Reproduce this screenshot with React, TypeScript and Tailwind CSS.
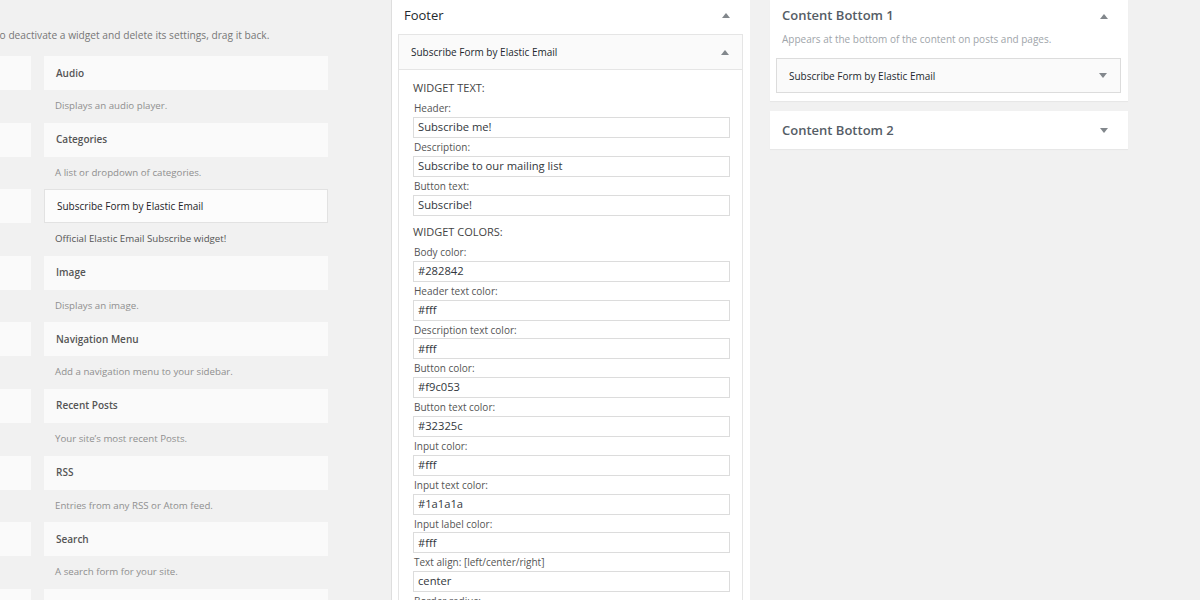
import React from "react";

type Widget = { title: string; desc: string; active?: boolean };

// first column is scrolled off to the left, only the card edges show
const leftColumnRows = 9;

const rightColumn: Widget[] = [
  { title: "Audio", desc: "Displays an audio player." },
  { title: "Categories", desc: "A list or dropdown of categories." },
  {
    title: "Subscribe Form by Elastic Email",
    desc: "Official Elastic Email Subscribe widget!",
    active: true,
  },
  { title: "Image", desc: "Displays an image." },
  { title: "Navigation Menu", desc: "Add a navigation menu to your sidebar." },
  { title: "Recent Posts", desc: "Your site\u2019s most recent Posts." },
  { title: "RSS", desc: "Entries from any RSS or Atom feed." },
  { title: "Search", desc: "A search form for your site." },
  { title: "Video", desc: "Displays a video from the media library." },
];

const textFields = [
  { label: "Header:", value: "Subscribe me!" },
  { label: "Description:", value: "Subscribe to our mailing list" },
  { label: "Button text:", value: "Subscribe!" },
];

const colorFields = [
  { label: "Body color:", value: "#282842" },
  { label: "Header text color:", value: "#fff" },
  { label: "Description text color:", value: "#fff" },
  { label: "Button color:", value: "#f9c053" },
  { label: "Button text color:", value: "#32325c" },
  { label: "Input color:", value: "#fff" },
  { label: "Input text color:", value: "#1a1a1a" },
  { label: "Input label color:", value: "#fff" },
  { label: "Text align: [left/center/right]", value: "center" },
  { label: "Border radius:", value: "4px" },
];

const Arrow: React.FC<{ up?: boolean }> = ({ up }) => (
  <svg width="8" height="5" viewBox="0 0 8 5" className="shrink-0">
    <polygon points={up ? "0,5 8,5 4,0" : "0,0 8,0 4,5"} fill="#82878c" />
  </svg>
);

const WidgetCard: React.FC<{ widget: Widget }> = ({ widget }) => (
  <div>
    <div
      className={
        widget.active
          ? "h-[34px] flex items-center px-[12px] bg-[#fcfcfc] border border-[#e2e2e2] text-[10px] text-[#1d2327]"
          : "h-[34px] flex items-center px-[12px] bg-[#fafafa] text-[10px] font-semibold text-[#555]"
      }
    >
      {widget.title}
    </div>
    <div
      className={
        widget.active
          ? "h-[32.6px] flex items-center pl-[11px] text-[9.7px] text-[#555] whitespace-nowrap"
          : "h-[32.6px] flex items-center pl-[11px] text-[9.7px] text-[#8f8f8f] whitespace-nowrap"
      }
    >
      {widget.desc}
    </div>
  </div>
);

const Field: React.FC<{ label: string; value: string }> = ({ label, value }) => (
  <div>
    <div className="h-[17.8px] pt-[2px] leading-[15.8px] pl-px text-[10px] text-[#555]">
      {label}
    </div>
    <div className="h-[21px] flex items-center px-[4px] border border-[#dcdcdc] bg-white text-[11.2px] text-[#32373c]">
      {value}
    </div>
  </div>
);

export default function App() {
  return (
    <div className="w-[1200px] h-[600px] overflow-hidden bg-[#f1f1f1] flex items-start font-['Open_Sans',sans-serif]">
      {/* available widgets */}
      <div className="w-[391px] h-[600px] shrink-0 overflow-hidden flex flex-col">
        <p className="shrink-0 pt-[27px] leading-[16px] -ml-[6px] text-[10.2px] text-[#777] whitespace-nowrap">
          To deactivate a widget and delete its settings, drag it back.
        </p>
        <div className="shrink-0 mt-[13px] flex justify-end gap-[13px] pr-[63px]">
          <div className="w-[284px] shrink-0">
            {Array.from({ length: leftColumnRows }).map((_, i) => (
              <div key={i}>
                <div className="h-[34px] bg-[#fafafa]" />
                <div className="h-[32.6px]" />
              </div>
            ))}
          </div>
          <div className="w-[284px] shrink-0">
            {rightColumn.map((w) => (
              <WidgetCard key={w.title} widget={w} />
            ))}
          </div>
        </div>
      </div>

      {/* Footer sidebar */}
      <div className="w-[359px] h-[600px] shrink-0 overflow-hidden border-l border-[#dedede] bg-white flex flex-col">
        <div className="h-[34px] shrink-0 flex items-start justify-between pt-[6px] pl-[12px] pr-[20px]">
          <span className="text-[13px] leading-[18px] text-[#23282d]">Footer</span>
          <span className="pt-[7px]">
            <Arrow up />
          </span>
        </div>
        <div className="shrink-0 ml-[6px] mr-[7px] border border-[#e5e5e5] pb-[20px]">
          <div className="h-[35px] flex items-center justify-between pl-[12px] pr-[13px] bg-[#fafafa] border-b border-[#e5e5e5] text-[10px] text-[#23282d]">
            <span>Subscribe Form by Elastic Email</span>
            <Arrow up />
          </div>
          <div className="pl-[14px] pr-[12px]">
            <div className="pt-[10px] pb-[3.2px] leading-[16px] text-[11px] text-[#444]">
              WIDGET TEXT:
            </div>
            {textFields.map((f) => (
              <Field key={f.label} label={f.label} value={f.value} />
            ))}
            <div className="pt-[8.4px] pb-[3.1px] leading-[16px] text-[11px] text-[#444]">
              WIDGET COLORS:
            </div>
            {colorFields.map((f) => (
              <Field key={f.label} label={f.label} value={f.value} />
            ))}
          </div>
        </div>
      </div>

      {/* Content bottom sidebars */}
      <div className="w-[358px] shrink-0 ml-[20px] flex flex-col gap-[10px]">
        <div className="bg-white shadow-[0_1px_1px_rgba(0,0,0,0.04)] pb-[8px]">
          <div className="h-[31px] pt-px flex items-center justify-between pl-[12px] pr-[20px]">
            <span className="text-[13px] font-semibold text-[#555d66]">Content Bottom 1</span>
            <Arrow up />
          </div>
          <p className="pl-[12px] h-[16px] flex items-center text-[10px] text-[#a0a5aa]">
            Appears at the bottom of the content on posts and pages.
          </p>
          <div className="mt-[11px] ml-[6px] mr-[7px] h-[35px] flex items-center justify-between pl-[12px] pr-[13px] bg-[#fafafa] border border-[#dcdcdc] text-[10px] text-[#23282d]">
            <span className="pt-px">Subscribe Form by Elastic Email</span>
            <Arrow />
          </div>
        </div>
        <div className="bg-white shadow-[0_1px_1px_rgba(0,0,0,0.04)] h-[38px] pt-px flex items-center justify-between pl-[12px] pr-[20px]">
          <span className="text-[13px] font-semibold text-[#555d66]">Content Bottom 2</span>
          <Arrow />
        </div>
      </div>
    </div>
  );
}
